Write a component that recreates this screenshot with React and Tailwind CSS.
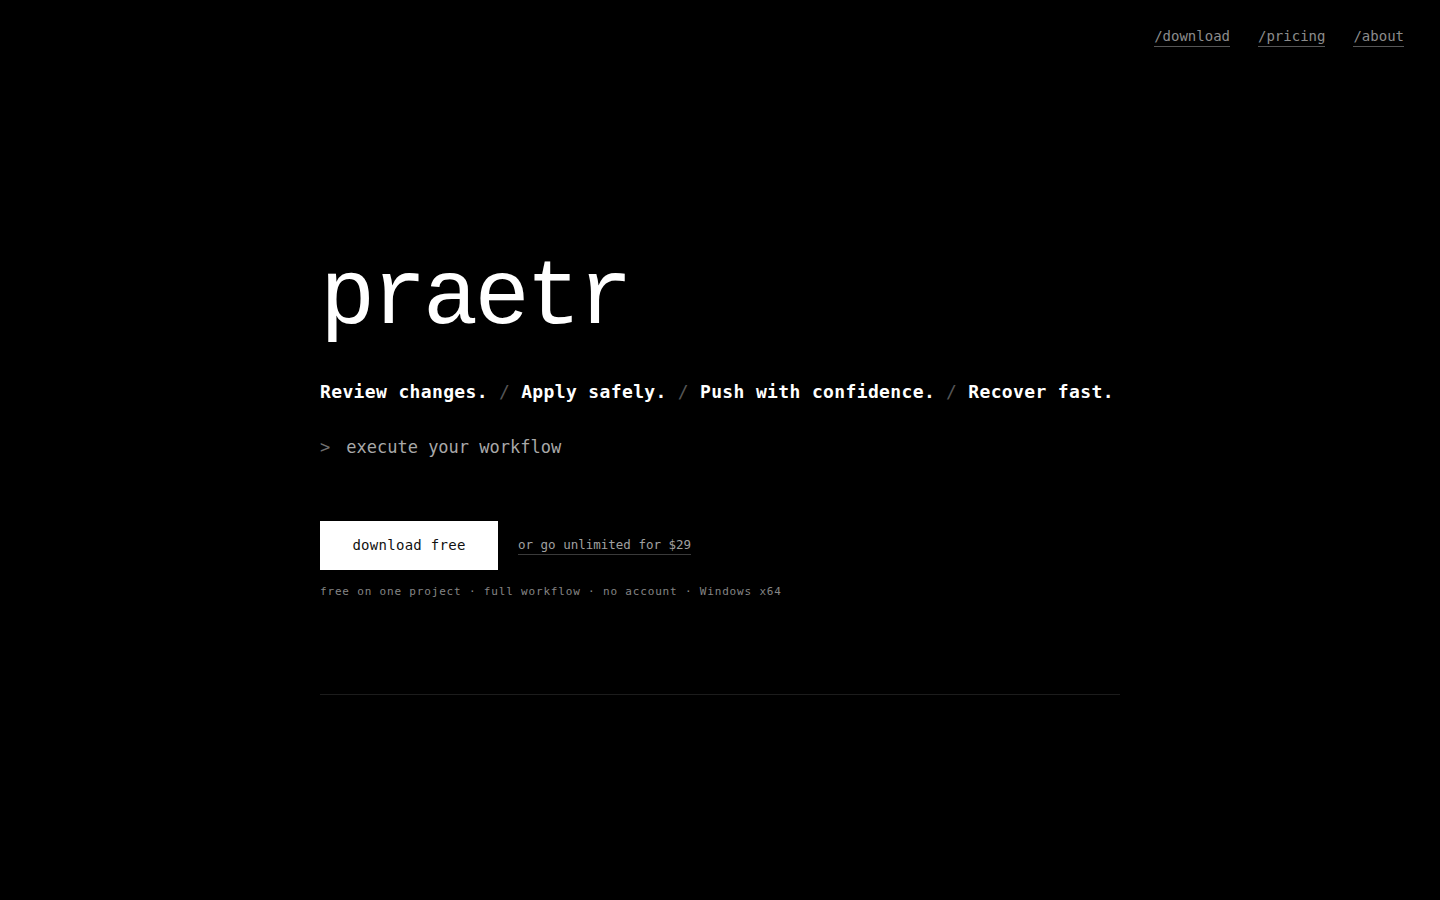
const mono = "font-['DejaVu_Sans_Mono','Liberation_Mono',monospace]";

const navLinks = ['/download', '/pricing', '/about'];
const steps = ['Review changes.', 'Apply safely.', 'Push with confidence.', 'Recover fast.'];

export default function App() {
  return (
    <div className={`min-h-screen bg-black text-white ${mono}`}>
      <header className="flex justify-end gap-7 px-9 pt-[27px]">
        {navLinks.map((link) => (
          <a
            key={link}
            href="#"
            className="text-[14px] leading-[18px] text-[#8c8c8c] border-b border-[#555] pb-[1px]"
          >
            {link}
          </a>
        ))}
      </header>

      <main className="mx-auto w-[800px] pt-[206px]">
        <h1 className="font-['Liberation_Mono',monospace] text-[92px] leading-none tracking-[-0.04em] text-white">
          praetr
        </h1>

        <p className="mt-[35px] flex items-center text-[18px] leading-6 font-bold tracking-[0.02em]">
          {steps.map((step, i) => (
            <span key={step} className="flex items-center">
              {i > 0 && <span className="mx-[11px] font-normal text-[#555]">/</span>}
              <span>{step}</span>
            </span>
          ))}
        </p>

        <p className="mt-[31px] flex items-center text-[17px] leading-6 text-[#a8a8a8]">
          <span className="mr-[16px] text-[#6f6f6f]">&gt;</span>
          execute your workflow
        </p>

        <div className="mt-[62px] flex items-center gap-5">
          <button className="h-[49px] w-[178px] bg-white text-[14px] tracking-[0.02em] text-[#111]">
            download free
          </button>
          <a
            href="#"
            className="text-[12.5px] leading-[16px] text-[#a0a0a0] border-b border-[#3a3a3a] pb-[1px]"
          >
            or go unlimited for $29
          </a>
        </div>

        <p className="mt-[14px] text-[11px] leading-4 tracking-[0.075em] text-[#858585]">
          free on one project · full workflow · no account · Windows x64
        </p>

        <div className="mt-[94px] h-px bg-[#1c1c1c]" />
      </main>
    </div>
  );
}
